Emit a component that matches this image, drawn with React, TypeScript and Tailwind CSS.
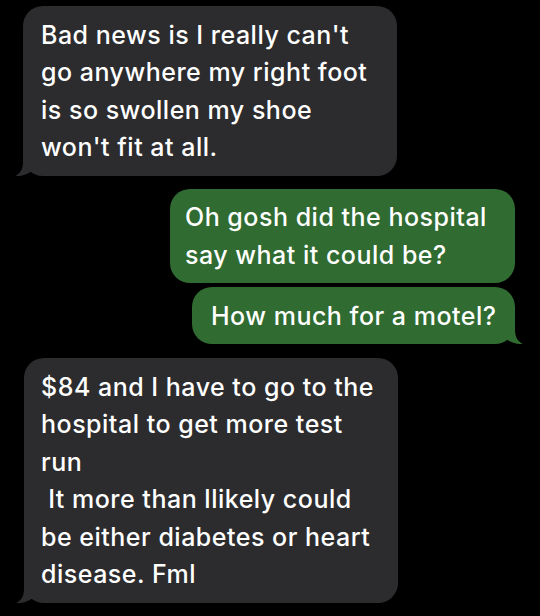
import React from "react";

function TailLeft({ fillClass }: { fillClass: string }) {
  return (
    <svg
      className="absolute left-[-8px] bottom-0"
      width="22"
      height="24"
      viewBox="-8 -24 22 24"
    >
      <path
        className={fillClass}
        d="M0 -24 L0 -14 C0 -6 -3.5 -2 -8 0 C-3 0.6 3 -1 9 -5 L12 -24 Z"
      />
    </svg>
  );
}

function TailRight({ fillClass }: { fillClass: string }) {
  return (
    <svg
      className="absolute right-[-8px] bottom-0"
      width="22"
      height="24"
      viewBox="-14 -24 22 24"
    >
      <path
        className={fillClass}
        d="M0 -24 L0 -14 C0 -6 3.5 -2 8 0 C3 0.6 -3 -1 -9 -5 L-12 -24 Z"
      />
    </svg>
  );
}

export default function App() {
  return (
    <div className="w-[540px] h-[616px] bg-black overflow-hidden flex flex-col pt-[6px] text-white text-[25px] font-medium tracking-[0.5px] leading-[37.5px] font-['Inter','Noto_Sans',sans-serif]">
      <div className="self-start ml-[23px] w-[374px] relative rounded-[20px] pt-[10.5px] pb-[9px] pl-[18px] whitespace-pre bg-[#2c2c2e]">
        {"Bad news is I really can't\ngo anywhere my right foot\nis so swollen my shoe\nwon't fit at all."}
        <TailLeft fillClass="fill-[#2c2c2e]" />
      </div>

      <div className="self-end mt-[13px] mr-[25px] w-[345px] relative rounded-[20px] pt-[10.5px] pb-[9px] pl-[15px] whitespace-pre bg-[#306b31]">
        {"Oh gosh did the hospital\nsay what it could be?"}
      </div>

      <div className="self-end mt-[4px] mr-[25px] w-[323px] relative rounded-[20px] pt-[10.5px] pb-[9px] pl-[19px] whitespace-pre bg-[#306b31]">
        {"How much for a motel?"}
        <TailRight fillClass="fill-[#306b31]" />
      </div>

      <div className="self-start mt-[14px] ml-[24px] w-[374px] relative rounded-[20px] pt-[10.5px] pb-[9px] pl-[17px] whitespace-pre bg-[#2c2c2e]">
        {"$84 and I have to go to the\nhospital to get more test\nrun\n It more than llikely could\nbe either diabetes or heart\ndisease. Fml"}
        <TailLeft fillClass="fill-[#2c2c2e]" />
      </div>
    </div>
  );
}
